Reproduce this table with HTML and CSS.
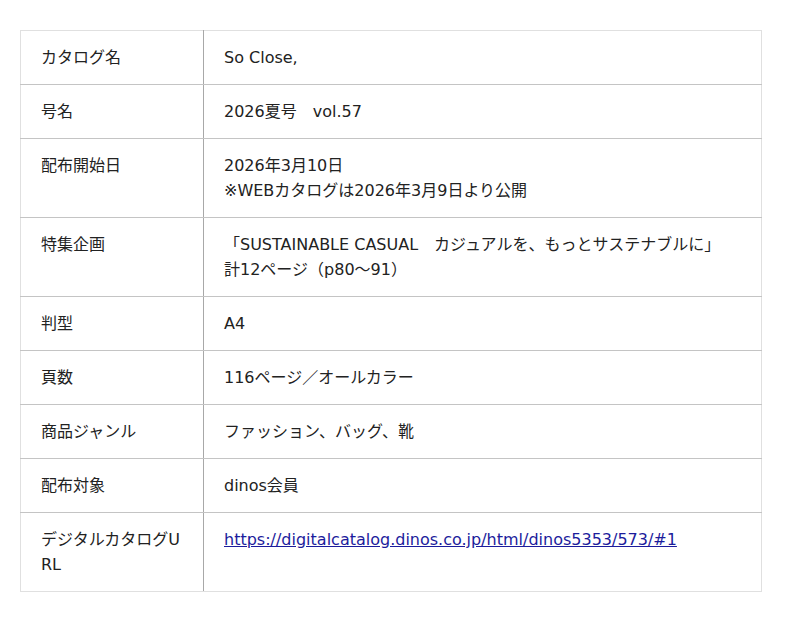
FILE: index.html
```html
<!DOCTYPE html>
<html lang="ja">
<head>
<meta charset="utf-8">
<link rel="stylesheet" href="styles.css">
</head>
<body>
<table class="spec">
  <tr><th>カタログ名</th><td>So Close,</td></tr>
  <tr><th>号名</th><td>2026夏号　vol.57</td></tr>
  <tr><th>配布開始日</th><td>2026年3月10日<br>※WEBカタログは2026年3月9日より公開</td></tr>
  <tr><th>特集企画</th><td>「SUSTAINABLE CASUAL　カジュアルを、もっとサステナブルに」<br>計12ページ（p80～91）</td></tr>
  <tr><th>判型</th><td>A4</td></tr>
  <tr><th>頁数</th><td>116ページ／オールカラー</td></tr>
  <tr><th>商品ジャンル</th><td>ファッション、バッグ、靴</td></tr>
  <tr><th>配布対象</th><td>dinos会員</td></tr>
  <tr><th>デジタルカタログURL</th><td><a class="link" href="#">https://digitalcatalog.dinos.co.jp/html/dinos5353/573/#1</a></td></tr>
</table>
</body>
</html>
```
FILE: styles.css
```css
html, body {
  margin: 0;
  background: #fff;
}
body {
  padding: 30px 20px;
  font-family: "DejaVu Sans", "Noto Sans CJK JP", sans-serif;
  font-size: 16px;
  line-height: 25px;
  color: #222;
}
.spec {
  width: 742px;
  border-collapse: collapse;
  border: 1px solid #e0e0e0;
}
.spec th, .spec td {
  padding: 14px 20px;
  text-align: left;
  vertical-align: top;
  font-weight: normal;
  border-bottom: 1px solid #c4c4c4;
}
.spec tr:last-child th, .spec tr:last-child td {
  border-bottom-color: #e0e0e0;
}
.spec th {
  width: 142px;
  border-right: 1px solid #a8a8a8;
  word-break: break-all;
}
.link {
  color: #1c1c9c;
  text-decoration: underline;
}
```
